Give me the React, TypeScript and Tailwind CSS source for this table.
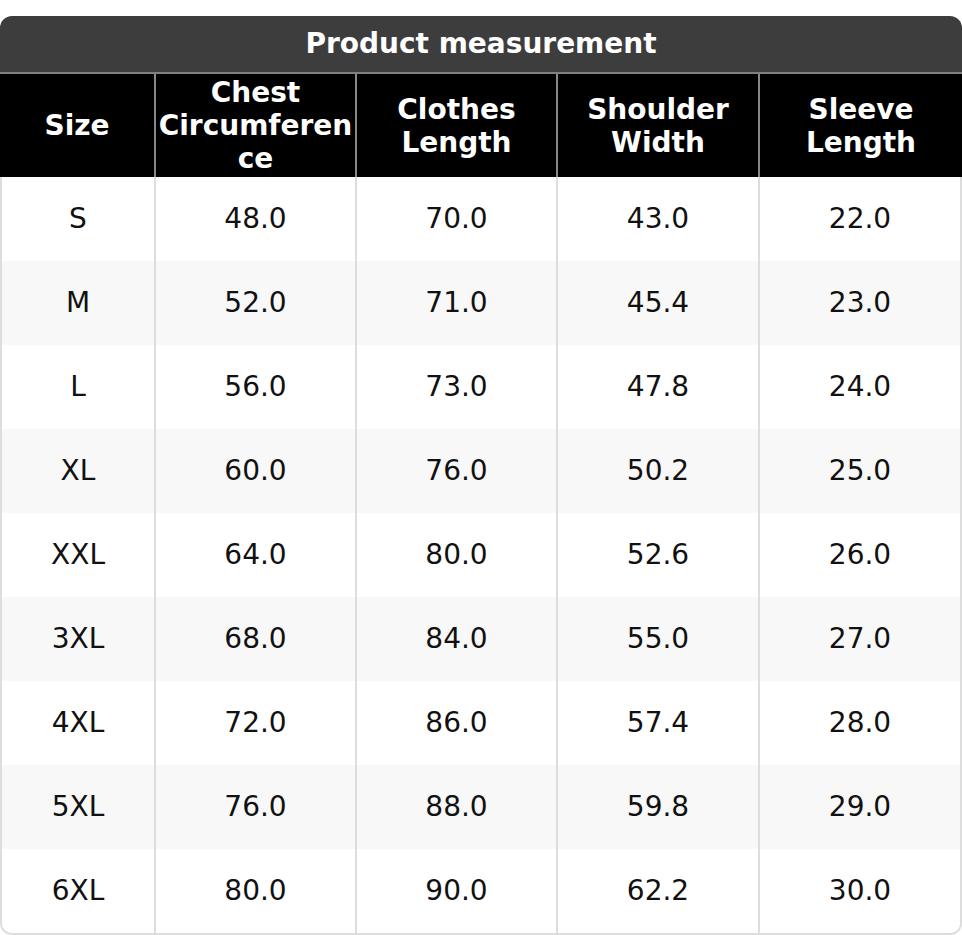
import React from 'react';

const COLUMNS = ['Size', 'Chest Circumference', 'Clothes Length', 'Shoulder Width', 'Sleeve Length'];

const ROWS = [
  ['S', '48.0', '70.0', '43.0', '22.0'],
  ['M', '52.0', '71.0', '45.4', '23.0'],
  ['L', '56.0', '73.0', '47.8', '24.0'],
  ['XL', '60.0', '76.0', '50.2', '25.0'],
  ['XXL', '64.0', '80.0', '52.6', '26.0'],
  ['3XL', '68.0', '84.0', '55.0', '27.0'],
  ['4XL', '72.0', '86.0', '57.4', '28.0'],
  ['5XL', '76.0', '88.0', '59.8', '29.0'],
  ['6XL', '80.0', '90.0', '62.2', '30.0'],
];

export default function App() {
  return (
    <div className="bg-white w-[962px] pt-4 font-['DejaVu_Sans',sans-serif]">
      <div className="rounded-t-[12px] overflow-hidden">
        <div className="h-[56px] bg-[#3d3d3d] flex items-center justify-center text-white font-bold text-[28px] border-b-2 border-[#808080] box-content">
          Product measurement
        </div>
        <div className="grid grid-cols-[154px_201px_201px_202px_1fr] bg-black text-white font-bold text-[28px] leading-[33px] h-[103px]">
          {COLUMNS.map((col, i) => (
            <div
              key={col}
              className={`flex items-center justify-center text-center ${i > 0 ? 'border-l-2 border-[#888]' : ''}`}
            >
              <span className="[overflow-wrap:anywhere]">{col}</span>
            </div>
          ))}
        </div>
      </div>

      <div className="border-x-2 border-b-2 border-[#ddd] rounded-b-[12px] overflow-hidden">
        {ROWS.map((row, r) => (
          <div
            key={row[0]}
            className={`grid grid-cols-[152px_201px_201px_202px_1fr] h-[84px] text-[28px] text-[#111] ${r % 2 === 1 ? 'bg-[#f8f8f8]' : 'bg-white'}`}
          >
            {row.map((cell, i) => (
              <div
                key={i}
                className={`flex items-center justify-center ${i > 0 ? 'border-l-2 border-[#ddd]' : ''}`}
              >
                {cell}
              </div>
            ))}
          </div>
        ))}
      </div>
    </div>
  );
}
